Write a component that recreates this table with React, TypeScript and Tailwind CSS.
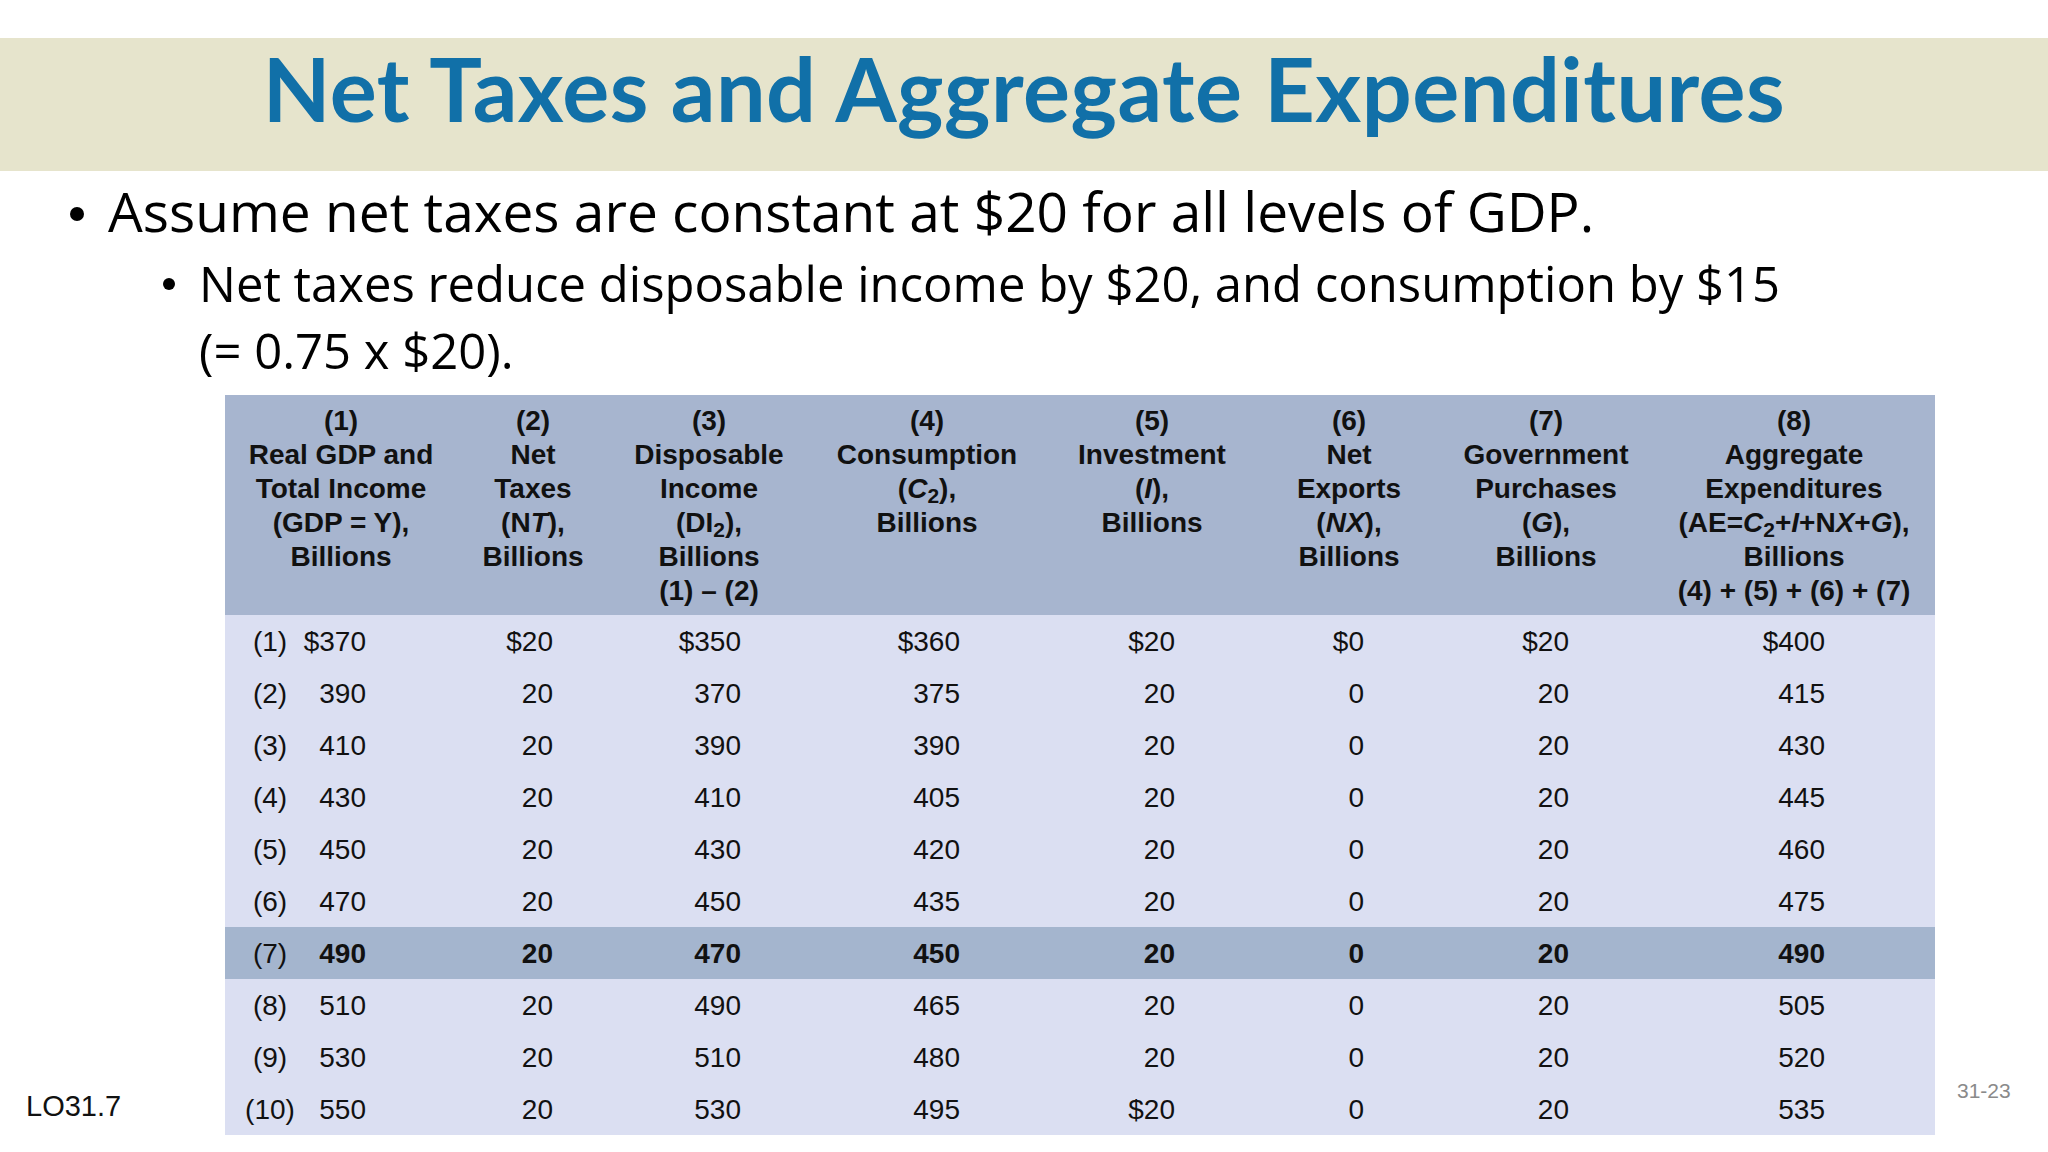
import React from 'react';

const cols = 'grid grid-cols-[232px_152px_200px_236px_214px_180px_214px_282px]';

// right padding per data column so numbers line up like the slide
const pads = ['', 'pr-[56px]', 'pr-[68px]', 'pr-[85px]', 'pr-[84px]', 'pr-[75px]', 'pr-[84px]', 'pr-[110px]'];

const rows: string[][] = [
  ['$370', '$20', '$350', '$360', '$20', '$0', '$20', '$400'],
  ['390', '20', '370', '375', '20', '0', '20', '415'],
  ['410', '20', '390', '390', '20', '0', '20', '430'],
  ['430', '20', '410', '405', '20', '0', '20', '445'],
  ['450', '20', '430', '420', '20', '0', '20', '460'],
  ['470', '20', '450', '435', '20', '0', '20', '475'],
  ['490', '20', '470', '450', '20', '0', '20', '490'],
  ['510', '20', '490', '465', '20', '0', '20', '505'],
  ['530', '20', '510', '480', '20', '0', '20', '520'],
  ['550', '20', '530', '495', '$20', '0', '20', '535'],
];

function HeadCell({ children }: { children: React.ReactNode }) {
  return <div className="flex flex-col items-center text-center">{children}</div>;
}

export default function App() {
  return (
    <div className="w-[2048px] h-[1152px] bg-white overflow-hidden">
      {/* title bar */}
      <div className="mt-[38px] h-[133px] bg-[#e6e4cc] flex justify-center">
        <h1 className="text-[88px] leading-[100px] font-bold text-[#1170a8] tracking-[0.5px] font-['Lato',sans-serif]">
          Net Taxes and Aggregate Expenditures
        </h1>
      </div>

      {/* bullets */}
      <div className="font-['Open_Sans',sans-serif] text-black">
        <div className="mt-[9px] flex items-start pl-[70px] gap-[24px] text-[55px] leading-[62px]">
          <span className="mt-[27px] w-[14px] h-[14px] rounded-full bg-black shrink-0" />
          <p>Assume net taxes are constant at $20 for all levels of GDP.</p>
        </div>
        <div className="mt-[8px] flex items-start pl-[163px] gap-[24px] text-[49px] leading-[67px]">
          <span className="mt-[28px] w-[12px] h-[12px] rounded-full bg-black shrink-0" />
          <p>
            Net taxes reduce disposable income by $20, and consumption by $15
            <br />
            (= 0.75 x $20).
          </p>
        </div>
      </div>

      {/* table row with slide footers either side */}
      <div className="mt-[11px] flex font-['Liberation_Sans',Arial,sans-serif] text-[#111]">
        <div className="w-[225px] flex flex-col justify-end pb-[12px] pl-[26px]">
          <span className="text-[29px] leading-[34px]">LO31.7</span>
        </div>

        <div className="w-[1710px]">
          <div className={`${cols} bg-[#a7b5cf] h-[220px] pt-[9px] text-[28px] leading-[34px] font-bold`}>
            <HeadCell>
              <span>(1)</span>
              <span>Real GDP and</span>
              <span>Total Income</span>
              <span>(GDP = Y),</span>
              <span>Billions</span>
            </HeadCell>
            <HeadCell>
              <span>(2)</span>
              <span>Net</span>
              <span>Taxes</span>
              <span>
                (N<i>T</i>),
              </span>
              <span>Billions</span>
            </HeadCell>
            <HeadCell>
              <span>(3)</span>
              <span>Disposable</span>
              <span>Income</span>
              <span>
                (DI<sub>2</sub>),
              </span>
              <span>Billions</span>
              <span>(1) – (2)</span>
            </HeadCell>
            <HeadCell>
              <span>(4)</span>
              <span>Consumption</span>
              <span>
                (<i>C</i>
                <sub>2</sub>),
              </span>
              <span>Billions</span>
            </HeadCell>
            <HeadCell>
              <span>(5)</span>
              <span>Investment</span>
              <span>
                (<i>I</i>),
              </span>
              <span>Billions</span>
            </HeadCell>
            <HeadCell>
              <span>(6)</span>
              <span>Net</span>
              <span>Exports</span>
              <span>
                (<i>NX</i>),
              </span>
              <span>Billions</span>
            </HeadCell>
            <HeadCell>
              <span>(7)</span>
              <span>Government</span>
              <span>Purchases</span>
              <span>
                (<i>G</i>),
              </span>
              <span>Billions</span>
            </HeadCell>
            <HeadCell>
              <span>(8)</span>
              <span>Aggregate</span>
              <span>Expenditures</span>
              <span>
                (AE=<i>C</i>
                <sub>2</sub>+<i>I</i>+N<i>X</i>+<i>G</i>),
              </span>
              <span>Billions</span>
              <span>(4) + (5) + (6) + (7)</span>
            </HeadCell>
          </div>

          {rows.map((r, i) => {
            const hi = i === 6;
            return (
              <div
                key={i}
                className={`${cols} h-[52px] items-center pt-[2px] text-[28px] ${hi ? 'bg-[#a4b5ce]' : 'bg-[#dbdff2]'}`}
              >
                <div className="flex items-center pl-[20px]">
                  <span className="w-[50px] text-center">({i + 1})</span>
                  <span className={`w-[71px] text-right ${hi ? 'font-bold' : ''}`}>{r[0]}</span>
                </div>
                {r.slice(1).map((v, j) => (
                  <div key={j} className={`text-right ${pads[j + 1]} ${hi ? 'font-bold' : ''}`}>
                    {v}
                  </div>
                ))}
              </div>
            );
          })}
        </div>

        <div className="flex-1 flex flex-col justify-end pb-[32px] pl-[22px]">
          <span className="text-[21px] leading-[24px] text-[#8a8a8a]">31-23</span>
        </div>
      </div>
    </div>
  );
}
